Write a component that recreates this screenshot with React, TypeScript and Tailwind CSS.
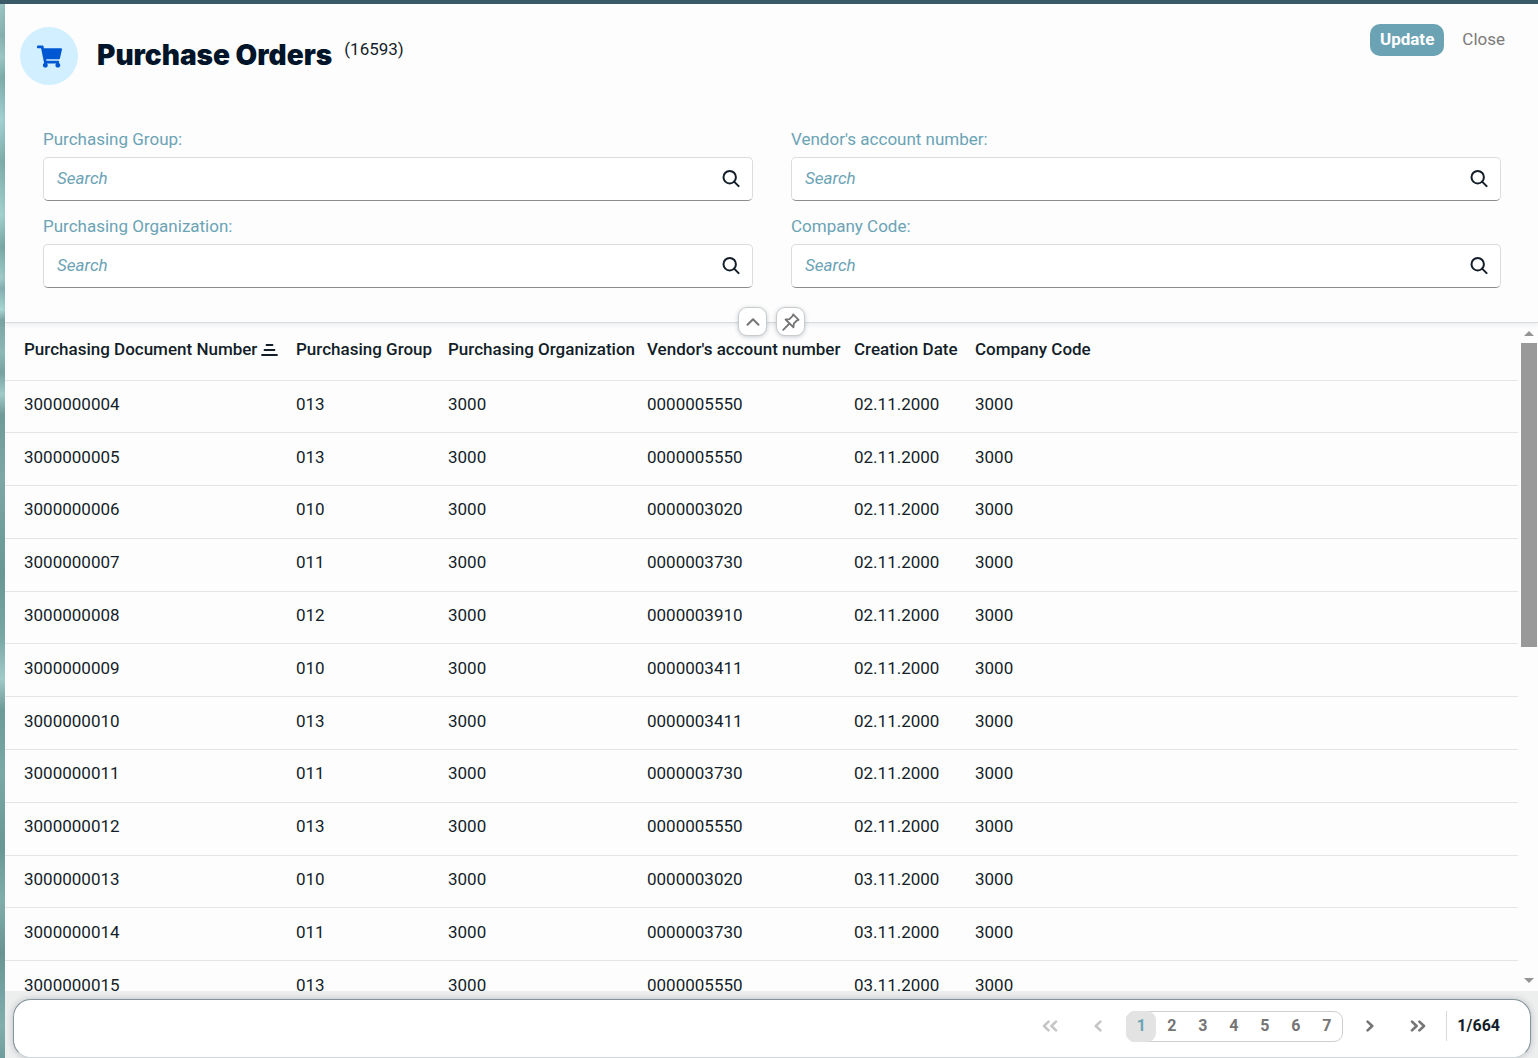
import React from "react";
import { FaShoppingCart } from "react-icons/fa";

const fields = [
  { id: "group", label: "Purchasing Group:" },
  { id: "vendor", label: "Vendor's account number:" },
  { id: "organization", label: "Purchasing Organization:" },
  { id: "company", label: "Company Code:" },
];

const orders = [
  ["3000000004", "013", "3000", "0000005550", "02.11.2000", "3000"],
  ["3000000005", "013", "3000", "0000005550", "02.11.2000", "3000"],
  ["3000000006", "010", "3000", "0000003020", "02.11.2000", "3000"],
  ["3000000007", "011", "3000", "0000003730", "02.11.2000", "3000"],
  ["3000000008", "012", "3000", "0000003910", "02.11.2000", "3000"],
  ["3000000009", "010", "3000", "0000003411", "02.11.2000", "3000"],
  ["3000000010", "013", "3000", "0000003411", "02.11.2000", "3000"],
  ["3000000011", "011", "3000", "0000003730", "02.11.2000", "3000"],
  ["3000000012", "013", "3000", "0000005550", "02.11.2000", "3000"],
  ["3000000013", "010", "3000", "0000003020", "03.11.2000", "3000"],
  ["3000000014", "011", "3000", "0000003730", "03.11.2000", "3000"],
  ["3000000015", "013", "3000", "0000005550", "03.11.2000", "3000"],
];

function SearchIcon() {
  return (
    <svg width="18" height="18" viewBox="0 0 18 18" fill="none" stroke="#131e29" strokeWidth="2">
      <circle cx="7.7" cy="7.2" r="6.2" />
      <path d="M12.1 11.6 L16.6 16.1" strokeLinecap="round" />
    </svg>
  );
}

function SearchField({ id, label }: { id: string; label: string }) {
  return (
    <div className="flex flex-col">
      <label htmlFor={id} className="mb-2 text-[17px] leading-5 text-[#6ba3b5]">
        {label}
      </label>
      <div className="flex h-11 items-center rounded-[5px] border border-[#dcdcdc] border-b-[#8c8c8c] bg-white pr-3 pl-[13px]">
        <input
          id={id}
          placeholder="Search"
          className="min-w-0 flex-1 bg-transparent text-[17px] text-[#131e29] italic outline-none placeholder:text-[#6ba3b5]"
        />
        <button type="button" aria-label={`Search ${label}`}>
          <SearchIcon />
        </button>
      </div>
    </div>
  );
}

function Chevrons({ double, back }: { double?: boolean; back?: boolean }) {
  return (
    <svg
      width="16"
      height="12"
      viewBox="0 0 16 12"
      fill="none"
      stroke="currentColor"
      strokeWidth="2.6"
      strokeLinejoin="round"
      strokeLinecap="round"
      className={back ? "rotate-180" : ""}
    >
      {double ? <path d="M2 1.6 L6.6 6 L2 10.4 M9.4 1.6 L14 6 L9.4 10.4" /> : <path d="M5.6 1.6 L10.2 6 L5.6 10.4" />}
    </svg>
  );
}

const pagerButton = "flex h-8 w-8 items-center justify-center";
const headerCell = "h-[57px] pl-[10px] first:pl-[19px] pb-[3px] font-medium whitespace-nowrap";

export default function App() {
  return (
    <div className="flex h-screen flex-col overflow-hidden border-t-4 border-[#3a5a67] bg-[#6f9fa0] font-['Roboto',sans-serif] text-[17px] text-[#131e29]">
      <div className="flex min-h-0 flex-1">
        <div className="w-[5px] shrink-0 bg-[linear-gradient(to_bottom,#9cc4c4_0%,#86b0b0_3%,#9cc6c6_5%,#7fabab_7%,#a3d0d0_11%,#7fabab_15%,#a3d0ce_20%,#7aa6a6_23%,#9ecac8_26%,#85aeb0_27%,#a8d6d4_29%,#7ba3a4_30%,#8db8b8_33%,#78a2a2_35%,#a0cac8_37%,#6f9a9a_39%,#7da7a7_45%,#6a9696_54%,#79a5a5_60%,#a0cac8_64%,#6f9a9a_67%,#7ba7a7_73%,#6a9696_80%,#82adad_85%,#6a9494_90%,#76a3a3_94%,#82adad_97%,#6f9c9c_100%)]" />
        <main className="flex min-w-0 flex-1 flex-col bg-[#fdfdfd]">
          <header className="relative z-10 border-b border-[#d9dcde] pb-[34px] shadow-[0_2px_4px_rgba(34,53,72,0.08)]">
            <div className="flex items-start justify-between pt-5 pr-[33px] pl-[15px]">
              <div className="flex pt-[3px]">
                <div className="flex size-[58px] items-center justify-center rounded-full bg-[#d1efff] text-[#0057d2]">
                  <FaShoppingCart size={25} />
                </div>
                <h1 className="ml-[19px] pt-2 font-['Inter',sans-serif] text-[28px] leading-10 font-black text-[#00142a]">
                  Purchase Orders
                </h1>
                <span className="ml-3 pt-3 leading-5">(16593)</span>
              </div>
              <div className="flex items-center gap-[18px]">
                <button type="button" className="h-8 rounded-[10px] bg-[#6ba3b5] px-[10px] font-bold text-white">
                  Update
                </button>
                <button type="button" className="h-8 text-[#7a7a7a]">
                  Close
                </button>
              </div>
            </div>
            <form className="mt-11 grid grid-cols-2 gap-x-[38px] gap-y-[15px] pr-[37px] pl-[38px]">
              {fields.map((field) => (
                <SearchField key={field.id} id={field.id} label={field.label} />
              ))}
            </form>
            <div className="absolute inset-x-0 -bottom-[14px] flex justify-center gap-[9px] text-[#757575]">
              <button
                type="button"
                aria-label="Collapse header"
                className="flex size-[29px] items-center justify-center rounded-[9px] border border-[#c8cccf] bg-white shadow-[0_1px_4px_rgba(34,53,72,0.25)]"
              >
                <svg width="14" height="10" viewBox="0 0 14 10" fill="none" stroke="currentColor" strokeWidth="2" strokeLinecap="round" strokeLinejoin="round">
                  <path d="M1.5 7.8 L7 2.2 L12.5 7.8" />
                </svg>
              </button>
              <button
                type="button"
                aria-label="Pin header"
                className="flex size-[29px] items-center justify-center rounded-[9px] border border-[#c8cccf] bg-white shadow-[0_1px_4px_rgba(34,53,72,0.25)]"
              >
                <svg width="18" height="18" viewBox="0 0 18 18" fill="none" stroke="currentColor" strokeWidth="1.8" strokeLinecap="round" strokeLinejoin="round">
                  <path d="M11.2 1.4 L16.6 6.8 L14.9 7.5 L11.8 10.6 L11.5 14.4 L3.6 6.5 L7.4 6.2 L10.5 3.1 Z M7 11 L1.2 16.8" />
                </svg>
              </button>
            </div>
          </header>

          <section className="flex min-h-0 flex-1 overflow-hidden">
            <div className="min-w-0 flex-1 overflow-hidden pr-[2px]">
              <table className="h-[691px] w-full table-fixed border-collapse text-left">
                <colgroup>
                  <col className="w-[281px]" />
                  <col className="w-[152px]" />
                  <col className="w-[199px]" />
                  <col className="w-[207px]" />
                  <col className="w-[121px]" />
                  <col />
                </colgroup>
                <thead>
                  <tr className="h-[57px] border-b border-[#e5e5e5]">
                    <th className={headerCell}>
                      <span className="flex items-center gap-1">
                        Purchasing Document Number
                        <svg width="17" height="12" viewBox="0 0 17 12" fill="none" stroke="currentColor" strokeWidth="1.8" strokeLinecap="round">
                          <path d="M5.5 1 H11.5 M3.5 6 H13.5 M1 11 H16" />
                        </svg>
                      </span>
                    </th>
                    <th className={headerCell}>Purchasing Group</th>
                    <th className={headerCell}>Purchasing Organization</th>
                    <th className={headerCell}>Vendor's account number</th>
                    <th className={headerCell}>Creation Date</th>
                    <th className={headerCell}>Company Code</th>
                  </tr>
                </thead>
                <tbody>
                  {orders.map((order) => (
                    <tr key={order[0]} className="border-b border-[#e5e5e5]">
                      {order.map((value, index) => (
                        <td key={index} className="pb-[5px] pl-[10px] leading-5 first:pl-[19px]">
                          {value}
                        </td>
                      ))}
                    </tr>
                  ))}
                </tbody>
              </table>
            </div>
            <div className="flex w-[18px] shrink-0 flex-col items-center pt-2 pr-px pb-2" aria-hidden="true">
              <svg width="10" height="5" viewBox="0 0 10 5" fill="#949494">
                <path d="M0 5 L5 0 L10 5 Z" />
              </svg>
              <div className="mt-[7px] h-[304px] w-4 bg-[#999999]" />
              <svg width="10" height="5" viewBox="0 0 10 5" fill="#949494" className="mt-auto">
                <path d="M0 0 L5 5 L10 0 Z" />
              </svg>
            </div>
          </section>

          <footer className="bg-[#edeeee] pt-2 pr-[7px] pl-2">
            <nav
              aria-label="Pages"
              className="flex items-center justify-end rounded-[18px] border border-[#82939b] border-b-[#d0d5d8] bg-white pt-[10px] pb-[15px] pr-[30px] text-base font-bold text-[#757575] shadow-[0_0_6px_rgba(34,53,72,0.25)]"
            >
              <button type="button" aria-label="First page" className={`${pagerButton} text-[#c6c6c6]`}>
                <Chevrons double back />
              </button>
              <button type="button" aria-label="Previous page" className={`${pagerButton} ml-4 text-[#c6c6c6]`}>
                <Chevrons back />
              </button>
              <div className="ml-3 flex h-[31px] rounded-[9px] border border-[#cfcfcf]">
                <button type="button" aria-current="page" className="-my-px -ml-px h-[31px] w-[30px] rounded-[9px] bg-[#e3e3e3] text-[#6ba3b5]">
                  1
                </button>
                {["2", "3", "4", "5", "6", "7"].map((page) => (
                  <button key={page} type="button" className="w-[31px]">
                    {page}
                  </button>
                ))}
              </div>
              <button type="button" aria-label="Next page" className={`${pagerButton} ml-[11px]`}>
                <Chevrons />
              </button>
              <button type="button" aria-label="Last page" className={`${pagerButton} ml-4`}>
                <Chevrons double />
              </button>
              <span className="ml-3 border-l border-[#d9d9d9] py-[3px] pl-[10px] text-[#131e29]">1/664</span>
            </nav>
          </footer>
        </main>
      </div>
    </div>
  );
}
